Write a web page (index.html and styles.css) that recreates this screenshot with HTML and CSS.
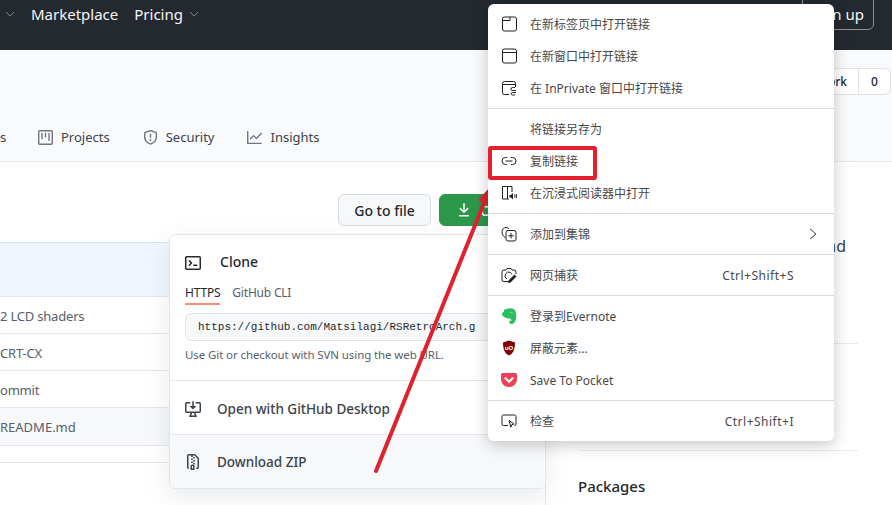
FILE: index.html
```html
<!DOCTYPE html>
<html lang="zh-CN">
<head>
    <meta charset="UTF-8">
    <title>RSRetroArch</title>
    <link rel="stylesheet" href="styles.css">
</head>
<body>
    <div class="page">
        <header class="top-bar">
            <svg class="nav-chevron first-chevron" viewBox="0 0 12 12"><path d="M1 3.5l5 5 5-5"/></svg>
            <a class="nav-link market">Marketplace</a>
            <a class="nav-link">Pricing</a>
            <svg class="nav-chevron" viewBox="0 0 12 12"><path d="M1 3.5l5 5 5-5"/></svg>
            <a class="sign-up">Sign up</a>
        </header>

        <section class="repo-head">
            <div class="repo-actions">
                <span class="fork-label">Fork</span>
                <span class="fork-count">0</span>
            </div>
            <nav class="tabs">
                <span class="tab cut-tab">s</span>
                <span class="tab">
                    <svg class="gh-icon" viewBox="0 0 16 16"><path d="M1.75 0A1.75 1.75 0 000 1.75v12.5C0 15.216.784 16 1.75 16h12.5A1.75 1.75 0 0016 14.25V1.75A1.75 1.75 0 0014.25 0H1.75zM1.5 1.75a.25.25 0 01.25-.25h12.5a.25.25 0 01.25.25v12.5a.25.25 0 01-.25.25H1.75a.25.25 0 01-.25-.25V1.75zM11.75 3a.75.75 0 00-.75.75v7.5a.75.75 0 001.5 0v-7.5a.75.75 0 00-.75-.75zm-8.25.75a.75.75 0 011.5 0v5.5a.75.75 0 01-1.5 0v-5.5zM8 3a.75.75 0 00-.75.75v3.5a.75.75 0 001.5 0v-3.5A.75.75 0 008 3z"/></svg>
                    Projects
                </span>
                <span class="tab">
                    <svg class="gh-icon" viewBox="0 0 16 16"><path d="M7.467.133a1.75 1.75 0 011.066 0l5.25 1.68A1.75 1.75 0 0115 3.48V7c0 1.566-.32 3.182-1.303 4.682-.983 1.498-2.585 2.813-5.032 3.855a1.7 1.7 0 01-1.33 0c-2.447-1.042-4.049-2.357-5.032-3.855C1.32 10.182 1 8.566 1 7V3.48a1.75 1.75 0 011.217-1.667l5.25-1.68zm.61 1.429a.25.25 0 00-.153 0l-5.25 1.68a.25.25 0 00-.174.238V7c0 1.358.275 2.666 1.057 3.86.784 1.194 2.121 2.34 4.366 3.297a.2.2 0 00.154 0c2.245-.956 3.582-2.104 4.366-3.298C13.225 9.666 13.5 8.36 13.5 7V3.48a.25.25 0 00-.174-.237l-5.25-1.68zM9 10.5a1 1 0 11-2 0 1 1 0 012 0zm-.25-5.75a.75.75 0 10-1.5 0v3a.75.75 0 001.5 0v-3z"/></svg>
                    Security
                </span>
                <span class="tab">
                    <svg class="gh-icon" viewBox="0 0 16 16"><path d="M1.5 1.75a.75.75 0 00-1.5 0v12.5c0 .414.336.75.75.75h14.5a.75.75 0 000-1.5H1.5V1.75zm14.28 2.53a.75.75 0 00-1.06-1.06L10 7.94 7.53 5.47a.75.75 0 00-1.06 0L3.22 8.72a.75.75 0 001.06 1.06L7 7.06l2.47 2.47a.75.75 0 001.06 0l5.25-5.25z"/></svg>
                    Insights
                </span>
            </nav>
        </section>

        <main class="repo-body">
            <div class="files-col">
                <div class="file-actions">
                    <span class="btn">Go to file</span>
                    <span class="btn btn-green">
                        <svg class="gh-icon" viewBox="0 0 16 16"><path d="M7.47 10.78a.75.75 0 001.06 0l3.75-3.75a.75.75 0 00-1.06-1.06L8.75 8.44V1.75a.75.75 0 00-1.5 0v6.69L4.78 5.97a.75.75 0 00-1.06 1.06l3.75 3.75zM3.75 13a.75.75 0 000 1.5h8.5a.75.75 0 000-1.5h-8.5z"/></svg>
                        Code
                    </span>
                </div>
                <div class="file-table">
                    <div class="commit-row"></div>
                    <div class="file-row tight-row">2 LCD shaders</div>
                    <div class="file-row tight-row">CRT-CX</div>
                    <div class="file-row tight-row">ommit</div>
                    <div class="file-row file-hover">README.md</div>
                </div>
            </div>
            <aside class="side-col">
                <p class="about-end">nd</p>
                <div class="side-rule first-rule"></div>
                <div class="side-rule second-rule"></div>
                <h2 class="side-title">Packages</h2>
            </aside>
        </main>
    </div>

    <!-- Code dropdown -->
    <div class="clone-box">
        <div class="clone-main">
            <div class="clone-title">
                <svg class="gh-icon" viewBox="0 0 16 16"><path d="M0 2.75C0 1.784.784 1 1.75 1h12.5c.966 0 1.75.784 1.75 1.75v10.5A1.75 1.75 0 0114.25 15H1.75A1.75 1.75 0 010 13.25V2.75zm1.75-.25a.25.25 0 00-.25.25v10.5c0 .138.112.25.25.25h12.5a.25.25 0 00.25-.25V2.75a.25.25 0 00-.25-.25H1.75zM7.25 8a.75.75 0 01-.22.53l-2.25 2.25a.75.75 0 11-1.06-1.06L5.44 8 3.72 6.28a.75.75 0 111.06-1.06l2.25 2.25c.141.14.22.331.22.53zm1.5 1.5a.75.75 0 000 1.5h3a.75.75 0 000-1.5h-3z"/></svg>
                <span>Clone</span>
            </div>
            <div class="clone-tabs">
                <span class="clone-tab clone-tab-on">HTTPS</span>
                <span class="clone-tab">GitHub CLI</span>
            </div>
            <div class="clone-url">https://github.com/Matsilagi/RSRetroArch.g</div>
            <p class="clone-note">Use Git or checkout with SVN using the web URL.</p>
        </div>
        <div class="clone-link clone-link-top">
            <svg class="gh-icon" viewBox="0 0 16 16"><path d="M4.927 5.427l2.896 2.896a.25.25 0 00.354 0l2.896-2.896A.25.25 0 0010.896 5H8.75V.75a.75.75 0 10-1.5 0V5H5.104a.25.25 0 00-.177.427z"/><path d="M1.573 2.573a.25.25 0 00-.073.177v7.5a.25.25 0 00.25.25h12.5a.25.25 0 00.25-.25v-7.5a.25.25 0 00-.25-.25h-3a.75.75 0 110-1.5h3A1.75 1.75 0 0116 2.75v7.5A1.75 1.75 0 0114.25 12h-3.727c.099 1.041.52 1.872 1.292 2.757A.75.75 0 0111.25 16h-6.5a.75.75 0 01-.565-1.243c.772-.885 1.192-1.716 1.292-2.757H1.75A1.75 1.75 0 010 10.25v-7.5A1.75 1.75 0 011.75 1h3a.75.75 0 010 1.5h-3a.25.25 0 00-.177.073zM6.982 12a5.72 5.72 0 01-.765 2.5h3.566a5.72 5.72 0 01-.765-2.5H6.982z"/></svg>
            Open with GitHub Desktop
        </div>
        <div class="clone-link clone-link-on">
            <svg class="gh-icon" viewBox="0 0 16 16"><path d="M3.5 1.75a.25.25 0 01.25-.25h3a.75.75 0 000 1.5h.5a.75.75 0 000-1.5h2.086a.25.25 0 01.177.073l2.914 2.914a.25.25 0 01.073.177v8.586a.25.25 0 01-.25.25h-.5a.75.75 0 000 1.5h.5A1.75 1.75 0 0014 13.25V4.664c0-.464-.184-.909-.513-1.237L10.573.513A1.75 1.75 0 009.336 0H3.75A1.75 1.75 0 002 1.75v11.5c0 .649.353 1.214.874 1.515a.75.75 0 10.752-1.298.25.25 0 01-.126-.217V1.75zM8.75 3a.75.75 0 000 1.5h.5a.75.75 0 000-1.5h-.5zM6 5.25a.75.75 0 01.75-.75h.5a.75.75 0 010 1.5h-.5A.75.75 0 016 5.25zm2 1.5A.75.75 0 018.75 6h.5a.75.75 0 010 1.5h-.5A.75.75 0 018 6.75zm-1.25.75a.75.75 0 000 1.5h.5a.75.75 0 000-1.5h-.5zM8 9.75A.75.75 0 018.75 9h.5a.75.75 0 010 1.5h-.5A.75.75 0 018 9.75zm-.75.75a1.75 1.75 0 00-1.75 1.75v3c0 .414.336.75.75.75h2.5a.75.75 0 00.75-.75v-3a1.75 1.75 0 00-1.75-1.75h-.5zM7 12.25a.25.25 0 01.25-.25h.5a.25.25 0 01.25.25v2.25H7v-2.25z"/></svg>
            Download ZIP
        </div>
    </div>

    <!-- red arrow drawn on the screenshot, goes under the menu -->
    <svg class="arrow" viewBox="0 0 892 505">
        <path d="M376 471L484 203" fill="none" stroke="#dc2430" stroke-width="4" stroke-linecap="round"/>
        <path d="M490 187L478 200L497 210z" fill="#dc2430"/>
    </svg>

    <!-- browser context menu -->
    <div class="menu">
        <div class="menu-row">
            <svg class="menu-icon" viewBox="0 0 16 16"><rect x="1.500" y="1" width="14" height="14" rx="2"/><path d="M1.500 4.500h7.500V1"/></svg>
            <span>在新标签页中打开链接</span>
        </div>
        <div class="menu-row">
            <svg class="menu-icon" viewBox="0 0 16 16"><rect x="1.500" y="1" width="14" height="14" rx="2"/><path d="M1.500 4.500h14"/></svg>
            <span>在新窗口中打开链接</span>
        </div>
        <div class="menu-row">
            <svg class="menu-icon" viewBox="0 0 16 16"><path d="M8 14.500H3.500a2 2 0 01-2-2v-9a2 2 0 012-2h9a2 2 0 012 2V7M1.500 4.500h13"/><path d="M14 7.500h-2.500a1.500 1.500 0 000 3H15M15 12.500H11.500a1.200 1.200 0 000 2.500H14"/></svg>
            <span>在 InPrivate 窗口中打开链接</span>
        </div>
        <div class="menu-line"></div>
        <div class="menu-row">
            <span class="menu-icon"></span>
            <span>将链接另存为</span>
        </div>
        <div class="menu-row">
            <svg class="menu-icon" viewBox="0 0 16 16"><path d="M6 4.500H4.500a3.500 3.500 0 000 7H6M10 4.500h1.500a3.500 3.500 0 010 7H10M4.500 8h7"/></svg>
            <span>复制链接</span>
        </div>
        <div class="menu-row">
            <svg class="menu-icon" viewBox="0 0 16 16"><path d="M8 14H1.500V1.500h9.500V7M6.500 1.500V14"/><path class="fill" d="M8.500 10h1.500l2-2v6.500l-2-2H8.500z"/><path d="M13.500 9.500c.6.8.6 2.400 0 3.200M15 9c.8 1.200.8 3.200 0 4.400"/></svg>
            <span>在沉浸式阅读器中打开</span>
        </div>
        <div class="menu-line"></div>
        <div class="menu-row">
            <svg class="menu-icon" viewBox="0 0 16 16"><path d="M4 11.500C2.500 10.500 1 8.500 1 5.500 1 3 3 1.500 5 1.500c1.500 0 2.500.5 3 1.500"/><rect x="5" y="4.500" width="10" height="10.500" rx="2"/><path d="M10 7v5.500M7.300 9.800h5.400"/></svg>
            <span>添加到集锦</span>
            <svg class="menu-arrow" viewBox="0 0 8 12"><path d="M1 1l6 5-6 5"/></svg>
        </div>
        <div class="menu-line"></div>
        <div class="menu-row">
            <svg class="menu-icon" viewBox="0 0 16 16"><path d="M7 14.500H3a2 2 0 01-2-2V5a2 2 0 012-2h2l1-1.500h4L11 3h2a2 2 0 012 2v2"/><path d="M6 12a3.500 3.500 0 113.500-6.500 3.500 3.500 0 011.500 2"/><path class="fill" d="M7.500 13.500l6-6 2 2-6 6-2.500.5z"/></svg>
            <span>网页捕获</span>
            <span class="menu-keys">Ctrl+Shift+S</span>
        </div>
        <div class="menu-line"></div>
        <div class="menu-row">
            <svg class="menu-icon" viewBox="0 0 16 16"><path class="logo-green" d="M3 1.800L5.500 1C7.500-.3 10.500 0 12.500 1c2.200 1.200 2.800 4 2.800 7 0 3.500-1 6.300-2.800 7.400-1.400.8-3.400.6-4-.5-.5-1-.2-2.200.9-2.300.9-.1 1.300.4 1.500 1-.2-1.500-1-3-2.700-3.100-1.300-.1-2.500-.3-3.500-.8C2.200 9 1 7.500 .8 5.200L3 3.500z"/><path class="logo-ear" d="M9 4.500c1-.5 2.500-.3 3 .8"/></svg>
            <span>登录到Evernote</span>
        </div>
        <div class="menu-row">
            <svg class="menu-icon" viewBox="0 0 16 16"><path class="logo-ublock" d="M8 .500l6 2c0 5.500-1 10.500-6 13C3 13 2 8 2 2.500z"/><text class="ublock-text" x="8" y="10">uO</text></svg>
            <span>屏蔽元素...</span>
        </div>
        <div class="menu-row">
            <svg class="menu-icon" viewBox="0 0 16 16"><path class="logo-pocket" d="M1.500 1h13A1.500 1.500 0 0116 2.500V7c0 4.500-3.500 8-8 8s-8-3.500-8-8V2.500A1.500 1.500 0 011.500 1z"/><path class="pocket-mark" d="M4.500 6.200L8 9.700l3.500-3.500"/></svg>
            <span>Save To Pocket</span>
        </div>
        <div class="menu-line"></div>
        <div class="menu-row">
            <svg class="menu-icon" viewBox="0 0 16 16"><path d="M7 12.500H2.500a1.500 1.500 0 01-1.500-1.500V3.500A1.500 1.500 0 012.500 2h11A1.500 1.500 0 0115 3.500V11a1.500 1.500 0 01-1.500 1.500"/><path d="M8 7.500l5 3.500-2.300.7-.9 2.500z"/></svg>
            <span>检查</span>
            <span class="menu-keys">Ctrl+Shift+I</span>
        </div>
    </div>

    <div class="red-box"></div>
</body>
</html>
```

FILE: styles.css
```css
* {
    box-sizing: border-box;
}
body {
    margin: 0;
    width: 892px;
    height: 505px;
    overflow: hidden;
    position: relative;
    font-family: "Noto Sans", "Noto Sans CJK SC", sans-serif;
    color: #24292f;
    background-color: #fff;
}
.gh-icon {
    width: 16px;
    height: 16px;
    fill: currentColor;
    flex: none;
}

/* top bar */
.top-bar {
    height: 50px;
    padding: 0 18px 23px 5px;
    background-color: #24292f;
    display: flex;
    align-items: center;
    color: #fff;
}
.nav-link {
    font-size: 15px;
    color: #f4f6f7;
}
.market {
    margin: 0 16px;
}
.nav-chevron {
    width: 10px;
    height: 10px;
    margin-left: 6px;
    fill: none;
    stroke: #8d9298;
    stroke-width: 1.100;
}
.first-chevron {
    margin-left: 0;
}
.sign-up {
    align-self: flex-start;
    margin: -6px 0 0 auto;
    width: 72px;
    height: 36px;
    padding: 9px 9px 0 0;
    text-align: right;
    font-size: 15px;
    color: #f4f6f7;
    border: 1px solid #8d9298;
    border-radius: 6px;
}

/* repo header */
.repo-head {
    height: 112px;
    background-color: #f9fafc;
    border-bottom: 1px solid #e4e7eb;
    display: flex;
    flex-direction: column;
}
.repo-actions {
    display: flex;
    justify-content: flex-end;
    height: 27px;
    margin: 18px 1px 0 0;
    font-size: 12px;
    font-weight: 500;
}
.fork-label {
    padding: 4px 11px 0 40px;
    background-color: #fff;
    border: 1px solid #dfe2e6;
    border-radius: 6px 0 0 6px;
}
.fork-count {
    width: 32px;
    padding-top: 4px;
    text-align: center;
    background-color: #fff;
    border: 1px solid #dfe2e6;
    border-left: 0;
    border-radius: 0 6px 6px 0;
}
.tabs {
    display: flex;
    align-items: center;
    margin-top: 33px;
    font-size: 13px;
    color: #3b4249;
}
.tab {
    display: flex;
    align-items: center;
    gap: 8px;
    margin-right: 33px;
}
.tab .gh-icon {
    width: 15px;
    height: 15px;
    color: #6e7781;
}
.cut-tab {
    width: 38px;
    margin: 0;
}

/* main columns */
.repo-body {
    display: flex;
    height: 343px;
}
.files-col {
    width: 546px;
    flex: none;
    padding-right: 14px;
    border-right: 1px solid #e4e7eb;
}
.file-actions {
    display: flex;
    justify-content: flex-end;
    gap: 8px;
    padding-top: 32px;
}
.btn {
    display: flex;
    align-items: center;
    justify-content: center;
    gap: 8px;
    width: 93px;
    height: 32px;
    font-size: 14px;
    font-weight: 500;
    background-color: #f6f8fa;
    border: 1px solid #d8dde2;
    border-radius: 6px;
}
.btn-green {
    width: 92px;
    color: #fff;
    background-color: #2c974b;
    border-color: #2c974b;
}
.file-table {
    margin-top: 16px;
    border-top: 1px solid #d3e2f2;
    border-bottom: 1px solid #e4e7eb;
    padding-bottom: 16px;
}
.commit-row {
    height: 53px;
    background-color: #eff6ff;
}
.file-row {
    height: 37px;
    padding-top: 10px;
    font-size: 13px;
    color: #57606a;
    border-top: 1px solid #e4e7eb;
}
.tight-row {
    letter-spacing: -0.2px;
}
.file-hover {
    height: 39px;
    background-color: #f6f8fa;
    border-bottom: 1px solid #e4e7eb;
}
.side-col {
    flex: 1;
    padding: 0 34px 0 32px;
}
.about-end {
    margin: 74px 0 0;
    text-align: right;
    font-size: 16px;
    line-height: 20px;
    padding-right: 12px;
    color: #3b4249;
}
.side-rule {
    border-top: 1px solid #e9ebee;
}
.first-rule {
    margin-top: 87px;
}
.second-rule {
    margin-top: 106px;
}
.side-title {
    margin: 24px 0 0;
    font-size: 15px;
    font-weight: 500;
    line-height: 22px;
}

/* code dropdown */
.clone-box {
    position: absolute;
    left: 169px;
    top: 234px;
    width: 377px;
    height: 255px;
    background-color: #fff;
    border: 1px solid #e2e5e9;
    border-radius: 6px;
    box-shadow: 0 8px 24px rgba(140, 149, 159, 0.2);
    overflow: hidden;
}
.clone-main {
    height: 146px;
    padding: 18px 15px 0;
    border-bottom: 1px solid #e4e7eb;
}
.clone-title {
    display: flex;
    align-items: center;
    gap: 19px;
    height: 16px;
    font-size: 14px;
    font-weight: 500;
}
.clone-title .gh-icon {
    margin-top: 3px;
}
.clone-tabs {
    display: flex;
    gap: 12px;
    margin-top: 14px;
    font-size: 12px;
    letter-spacing: -0.2px;
    color: #57606a;
}
.clone-tab {
    height: 22px;
    padding-top: 1px;
}
.clone-tab-on {
    color: #24292f;
    border-bottom: 2px solid #fd8c73;
}
.clone-url {
    height: 28px;
    margin: 8px -40px 0 0;
    padding-left: 12px;
    font-family: "Liberation Mono", monospace;
    font-size: 11px;
    line-height: 26px;
    white-space: nowrap;
    background-color: #f6f8fa;
    border: 1px solid #e1e4e8;
    border-radius: 6px;
}
.clone-note {
    margin: 6px 0 0;
    font-size: 11.500px;
    letter-spacing: -0.1px;
    color: #57606a;
}
.clone-link {
    display: flex;
    align-items: center;
    gap: 16px;
    height: 53px;
    padding-left: 15px;
    font-size: 13.500px;
    font-weight: 500;
    color: #3b4249;
}
.clone-link-top {
    padding-top: 2px;
}
.clone-link-on {
    height: 54px;
    background-color: #f6f8fa;
    border-top: 1px solid #e4e7eb;
}

/* screenshot annotation */
.arrow {
    position: absolute;
    left: 0;
    top: 0;
    width: 892px;
    height: 505px;
}
.red-box {
    position: absolute;
    left: 488px;
    top: 146px;
    width: 109px;
    height: 34px;
    border: 4px solid #e3202c;
    border-radius: 3px;
}

/* context menu */
.menu {
    position: absolute;
    left: 488px;
    top: 4px;
    width: 346px;
    padding: 4px 0;
    background-color: #fff;
    border-radius: 6px;
    box-shadow: 0 4px 16px rgba(0, 0, 0, 0.22);
    font-size: 12px;
    color: #484848;
}
.menu-row {
    display: flex;
    align-items: center;
    height: 32px;
    padding: 0 40px 0 13px;
}
.menu-icon {
    width: 16px;
    height: 16px;
    flex: none;
    margin-right: 13px;
    fill: none;
    stroke: #1f1f1f;
    stroke-width: 1;
}
.menu-icon .fill {
    fill: #1f1f1f;
    stroke: none;
}
.logo-green {
    fill: #2dbe60;
    stroke: none;
}
.logo-ear {
    stroke: #a8e6bd;
    stroke-width: 0.800;
}
.logo-ublock {
    fill: #800000;
    stroke: none;
}
.ublock-text {
    fill: #fff;
    stroke: none;
    font-size: 6px;
    font-weight: 700;
    text-anchor: middle;
}
.logo-pocket {
    fill: #ef4056;
    stroke: none;
}
.pocket-mark {
    stroke: #fff;
    stroke-width: 2.200;
    stroke-linecap: round;
}
.menu-keys {
    margin-left: auto;
    letter-spacing: 0.5px;
}
.menu-arrow {
    width: 8px;
    height: 12px;
    margin: 0 -23px 0 auto;
    fill: none;
    stroke: #404040;
    stroke-width: 1;
}
.menu-line {
    height: 1px;
    margin: 4px 0;
    background-color: #d9d9d9;
}
```
